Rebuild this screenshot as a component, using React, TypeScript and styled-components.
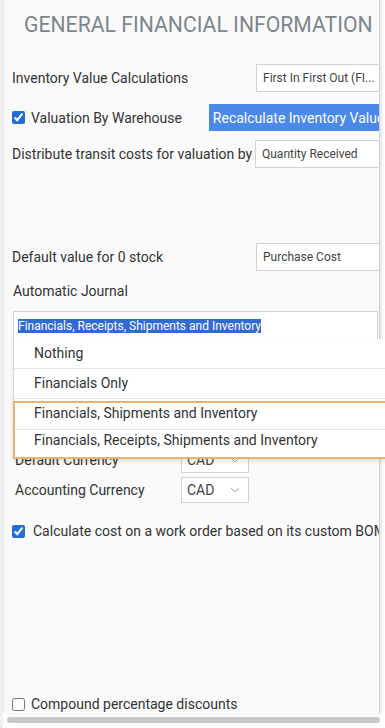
import React from "react";
import styled, { createGlobalStyle } from "styled-components";

const GlobalStyle = createGlobalStyle`
  html, body {
    margin: 0;
    padding: 0;
    background: #ffffff;
    font-family: Roboto, "Liberation Sans", Arial, sans-serif;
  }
`;

const Page = styled.div`
  position: relative;
  display: flex;
  flex-direction: column;
  width: 385px;
  height: 728px;
  overflow: hidden;
  background: linear-gradient(to right, #eef0f2 0, #eef0f2 3px, #ffffff 3px);
`;

const Panel = styled.div`
  margin-left: 3px;
  width: 375px;
  height: 713px;
  background: #fafafa;
  border-left: 1px solid #e3e6e9;
  border-right: 1px solid #cfcfcf;
  box-shadow: 2px 0 3px rgba(0, 0, 0, 0.1);
  overflow: hidden;
  flex-shrink: 0;
`;

const Content = styled.div`
  display: flex;
  flex-direction: column;
  width: 520px;
`;

const Title = styled.h1`
  margin: 0;
  height: 48px;
  line-height: 50px;
  padding-left: 20px;
  font-size: 21.2px;
  font-weight: 400;
  color: #7d868b;
  white-space: nowrap;
`;

const Row = styled.div<{ $top: number; $h?: number }>`
  display: flex;
  align-items: center;
  margin-top: ${(p) => p.$top}px;
  height: ${(p) => p.$h ?? 28}px;
  padding-left: 8px;
  white-space: nowrap;
`;

const Label = styled.span<{ $w?: number; $indent?: number }>`
  display: inline-block;
  box-sizing: border-box;
  width: ${(p) => (p.$w ? `${p.$w}px` : "auto")};
  padding-left: ${(p) => p.$indent ?? 0}px;
  flex-shrink: 0;
  font-size: 14px;
  color: #333;
`;

const Field = styled.div<{ $w: number }>`
  box-sizing: border-box;
  width: ${(p) => p.$w}px;
  height: 100%;
  display: flex;
  align-items: center;
  padding-left: 6px;
  border: 1px solid #d3d3d3;
  background: #fff;
  font-size: 12px;
  color: #444;
`;

const CheckBox = styled.input.attrs({ type: "checkbox" })<{ $gap?: number }>`
  width: 13px;
  height: 13px;
  margin: 0 ${(p) => p.$gap ?? 6}px 0 0;
  accent-color: #1f6fd6;
  flex-shrink: 0;
`;

const BlueButton = styled.button<{ $gap: number }>`
  margin-left: ${(p) => p.$gap}px;
  height: 27px;
  width: 200px;
  padding: 0 0 0 4px;
  text-align: left;
  background: #4a88ea;
  border: none;
  color: #fff;
  font-family: Roboto, "Liberation Sans", Arial, sans-serif;
  font-size: 14px;
  white-space: nowrap;
  overflow: hidden;
`;

const JournalSelect = styled.div`
  box-sizing: border-box;
  margin: 10px 0 0 9px;
  width: 365px;
  height: 29px;
  border: 1px solid #d0d0d0;
  background: #fff;
  display: flex;
  align-items: center;
  padding-left: 4px;
`;

const Highlight = styled.span`
  background: #2f6bd3;
  color: #fff;
  font-size: 12px;
  line-height: 14px;
`;

const SmallSelect = styled.div`
  box-sizing: border-box;
  width: 68px;
  height: 100%;
  border: 1px solid #d3d3d3;
  background: #fff;
  display: flex;
  align-items: center;
  justify-content: space-between;
  padding: 0 8px 0 5px;
  font-size: 14px;
  color: #444;
`;

const Dropdown = styled.ul`
  position: absolute;
  top: 339px;
  left: 13px;
  width: 400px;
  margin: 0;
  padding: 0;
  list-style: none;
  background: #fff;
  border-left: 1px solid #d6d6d6;
  box-shadow: 0 2px 4px rgba(0, 0, 0, 0.12);
`;

const Option = styled.li`
  box-sizing: border-box;
  height: 30px;
  padding: 5px 0 0 20px;
  font-size: 14px;
  line-height: 18px;
  color: #333;
  border-bottom: 1px solid #e6e6e6;
  white-space: nowrap;
  &:last-child {
    border-bottom: none;
  }
`;

const Marked = styled.div`
  border: 2px solid #e7b46b;
  margin: 2px 0 0 -1px;
  ${Option} {
    height: 27px;
    padding-left: 19px;
    padding-top: 1px;
  }
`;

const ScrollBar = styled.div`
  margin: 4px 0 0 7px;
  width: 373px;
  height: 6px;
  border-radius: 3px;
  background: #c8c8c8;
`;

const Chevron = () => (
  <svg width="10" height="6" viewBox="0 0 10 6" fill="none">
    <path d="M1 1l4 4 4-4" stroke="#a8a8a8" strokeWidth="1" />
  </svg>
);

const App: React.FC = () => {
  return (
    <Page>
      <GlobalStyle />
      <Panel>
        <Content>
          <Title>GENERAL FINANCIAL INFORMATION</Title>

          <Row $top={16}>
            <Label $w={244}>Inventory Value Calculations</Label>
            <Field $w={160}>First In First Out (FI...</Field>
          </Row>

          <Row $top={12} $h={27}>
            <CheckBox defaultChecked />
            <Label>Valuation By Warehouse</Label>
            <BlueButton $gap={27}>Recalculate Inventory Value</BlueButton>
          </Row>

          <Row $top={9}>
            <Label $w={243}>Distribute transit costs for valuation by</Label>
            <Field $w={160}>Quantity Received</Field>
          </Row>

          <Row $top={75}>
            <Label $w={244}>Default value for 0 stock</Label>
            <Field $w={160}>Purchase Cost</Field>
          </Row>

          <Row $top={10} $h={20}>
            <Label $indent={1}>Automatic Journal</Label>
          </Row>

          <JournalSelect>
            <Highlight>Financials, Receipts, Shipments and Inventory</Highlight>
          </JournalSelect>

          <Row $top={107} $h={26}>
            <Label $w={169} $indent={3}>Default Currency</Label>
            <SmallSelect>
              CAD
              <Chevron />
            </SmallSelect>
          </Row>

          <Row $top={4} $h={26}>
            <Label $w={169} $indent={3}>Accounting Currency</Label>
            <SmallSelect>
              CAD
              <Chevron />
            </SmallSelect>
          </Row>

          <Row $top={18} $h={20}>
            <CheckBox defaultChecked $gap={8} />
            <Label>Calculate cost on a work order based on its custom BOM</Label>
          </Row>

          <Row $top={153} $h={20}>
            <CheckBox />
            <Label>Compound percentage discounts</Label>
          </Row>
        </Content>
      </Panel>
      <ScrollBar />

      <Dropdown>
        <Option>Nothing</Option>
        <Option>Financials Only</Option>
        <Marked>
          <Option>Financials, Shipments and Inventory</Option>
          <Option>Financials, Receipts, Shipments and Inventory</Option>
        </Marked>
      </Dropdown>
    </Page>
  );
};

export default App;
